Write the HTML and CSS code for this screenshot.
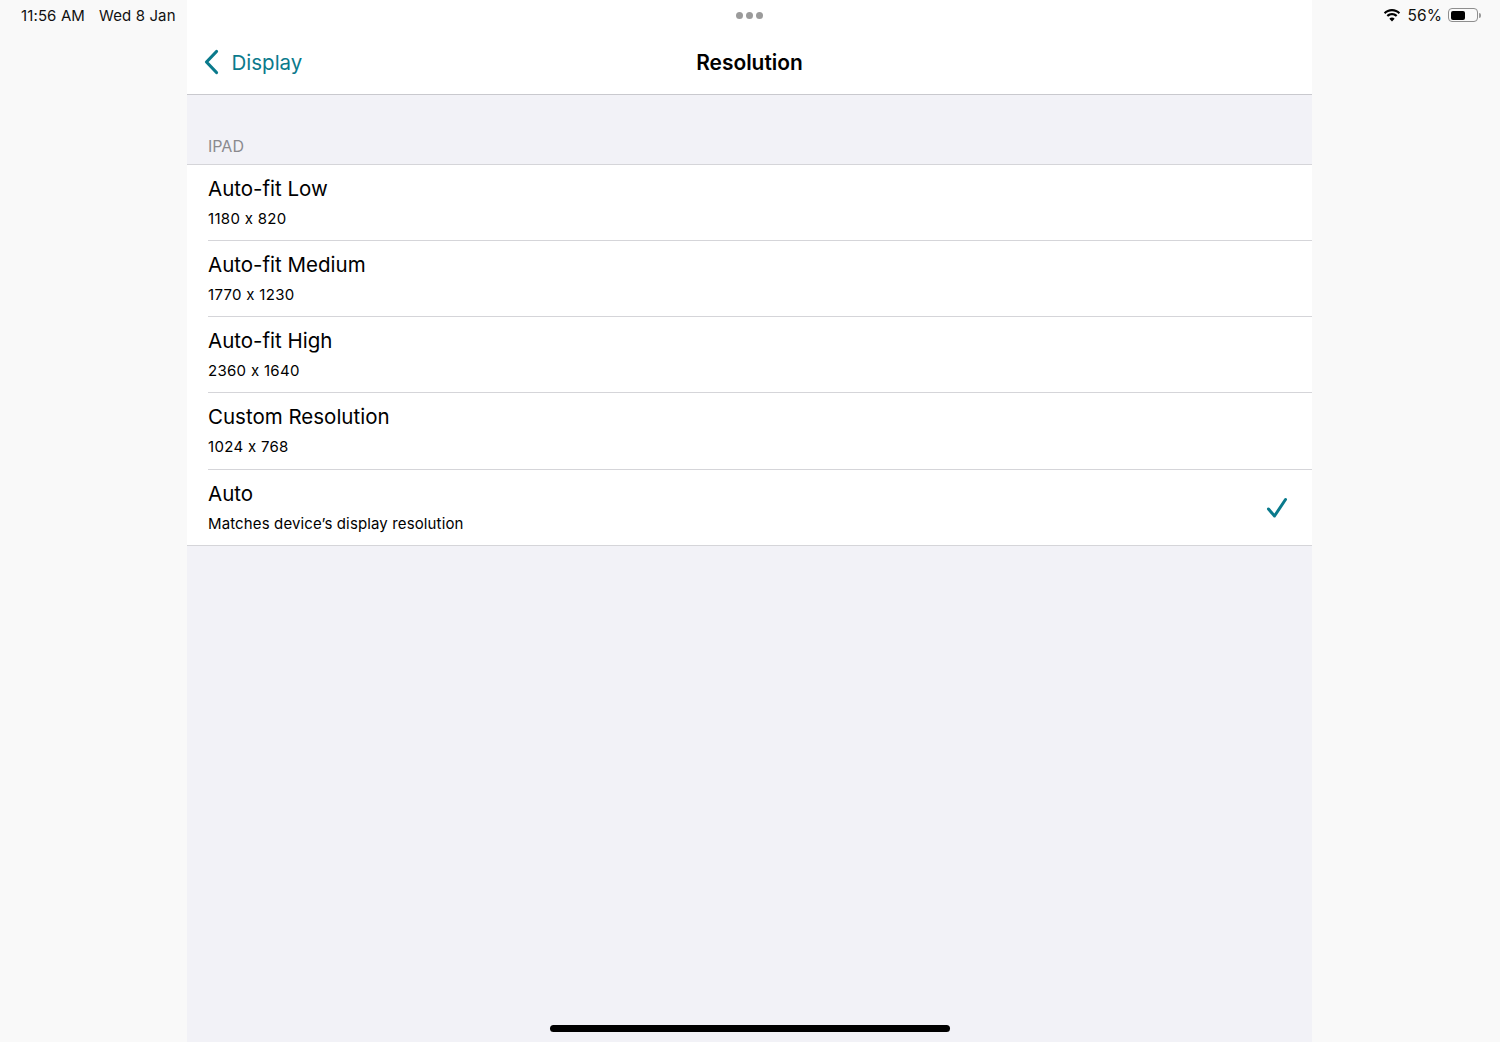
FILE: index.html
```html
<!DOCTYPE html>
<html lang="en">
<head>
  <meta charset="UTF-8">
  <title>Resolution</title>
  <link rel="stylesheet" href="styles.css">
</head>
<body>
  <div class="screen">
    <div class="side side-left">
      <span class="clock">11:56 AM</span>
      <span>Wed 8 Jan</span>
    </div>

    <div class="panel">
      <div class="navbar">
        <div class="dots"><i></i><i></i><i></i></div>
        <div class="nav-row">
          <a class="back">
            <svg width="16" height="26" viewBox="0 0 16 26"><path d="M13.5 2.5 L3.5 13 L13.5 23.5" fill="none" stroke="#0a7a8c" stroke-width="3.2" stroke-linecap="round" stroke-linejoin="round"/></svg>
            <span>Display</span>
          </a>
          <div class="title">Resolution</div>
        </div>
      </div>

      <div class="section-label">IPAD</div>
      <div class="list">
        <div class="row">
          <div class="row-text"><div class="row-title">Auto-fit Low</div><div class="row-sub row-dim">1180 x 820</div></div>
        </div>
        <div class="row">
          <div class="row-text"><div class="row-title">Auto-fit Medium</div><div class="row-sub row-dim">1770 x 1230</div></div>
        </div>
        <div class="row">
          <div class="row-text"><div class="row-title">Auto-fit High</div><div class="row-sub row-dim">2360 x 1640</div></div>
        </div>
        <div class="row">
          <div class="row-text"><div class="row-title">Custom Resolution</div><div class="row-sub row-dim">1024 x 768</div></div>
        </div>
        <div class="row row-last">
          <div class="row-text"><div class="row-title">Auto</div><div class="row-sub">Matches device’s display resolution</div></div>
          <svg class="check" width="22" height="22" viewBox="0 0 22 22"><path d="M2.5 12 L8.5 19 L19.5 2.5" fill="none" stroke="#0a7a8c" stroke-width="3" stroke-linecap="round" stroke-linejoin="round"/></svg>
        </div>
      </div>

      <div class="home-bar"></div>
    </div>

    <div class="side side-right">
      <svg width="18" height="14" viewBox="0 0 17 13"><path d="M8.5 3 C11 3 13.2 4 14.8 5.6 L16.2 4.1 C14.2 2.1 11.5 .9 8.5 .9 C5.5 .9 2.8 2.1 .8 4.1 L2.2 5.6 C3.8 4 6 3 8.5 3 Z M8.5 6.7 C10 6.7 11.2 7.3 12.2 8.2 L13.6 6.7 C12.2 5.4 10.5 4.7 8.5 4.7 C6.5 4.7 4.8 5.4 3.4 6.7 L4.8 8.2 C5.8 7.3 7 6.7 8.5 6.7 Z M8.5 12.6 L11 10 C10.3 9.3 9.5 8.9 8.5 8.9 C7.5 8.9 6.7 9.3 6 10 Z" fill="#000"/></svg>
      <span class="pct">56%</span>
      <div class="battery"><div class="battery-fill" style="width: 56%"></div></div>
      <div class="battery-tip"></div>
    </div>
  </div>
</body>
</html>
```

FILE: styles.css
```css
* {
  box-sizing: border-box;
}
html, body {
  margin: 0;
  height: 100%;
}
body {
  background-color: #f9f9f9;
  color: #000;
  font-family: Inter, "Liberation Sans", sans-serif;
  font-feature-settings: "calt" 0;
  overflow: hidden;
}
.screen {
  display: grid;
  grid-template-columns: 187px 1125px 188px;
  height: 1042px;
}
.side {
  display: flex;
  align-items: center;
  height: 30px;
  font-size: 15px;
  letter-spacing: .12px;
  color: #111;
}
.side-left {
  padding-left: 21px;
  gap: 14px;
}
.side-right {
  justify-content: flex-end;
  padding-right: 19px;
}
.pct {
  margin: 0 6px 0 6px;
  font-size: 15.5px;
}
.battery {
  width: 30px;
  height: 14px;
  border: 1px solid #8e8e8e;
  border-radius: 4px;
  padding: 1.5px;
}
.battery-fill {
  height: 100%;
  background-color: #000;
  border-radius: 2px;
}
.battery-tip {
  width: 2px;
  height: 5px;
  margin-left: 1px;
  background-color: #999;
  border-radius: 0 2px 2px 0;
}
.panel {
  display: flex;
  flex-direction: column;
  background-color: #f2f2f7;
  height: 1042px;
}
.navbar {
  height: 95px;
  background-color: #fff;
  border-bottom: 1px solid #c9c9ce;
}
.dots {
  display: flex;
  justify-content: center;
  gap: 3px;
  padding-top: 12px;
  height: 30px;
}
.dots i {
  width: 7px;
  height: 7px;
  border-radius: 50%;
  background-color: #9b9b9b;
}
.nav-row {
  display: grid;
  grid-template-columns: 1fr auto 1fr;
  align-items: center;
  height: 64px;
  padding: 0 16px;
}
.back {
  display: flex;
  align-items: center;
  gap: 12.5px;
  color: #0a7a8c;
  font-size: 20.5px;
}
.title {
  font-size: 20.9px;
  font-weight: 600;
}
.section-label {
  height: 70px;
  padding: 42px 0 0 21px;
  font-size: 16px;
  line-height: 18px;
  color: #8a8a8e;
  border-bottom: 1px solid #d5d5d9;
}
.list {
  background-color: #fff;
  padding-left: 21px;
  border-bottom: 1px solid #d5d5d9;
}
.row {
  display: flex;
  align-items: center;
  justify-content: space-between;
  height: 76.15px;
  padding-right: 24px;
  border-bottom: 1px solid #d5d5d9;
}
.row-last {
  border-bottom: none;
  height: 75px;
}
.row-text {
  align-self: flex-start;
  padding-top: 10px;
}
.row-title {
  font-size: 20.5px;
  line-height: 27px;
}
.row-sub {
  margin-top: 7px;
  font-size: 15px;
  letter-spacing: .13px;
  line-height: 19px;
}
.row-dim {
  letter-spacing: .3px;
}
.check {
  margin-top: 1px;
}
.home-bar {
  width: 400px;
  height: 7px;
  margin: auto auto 10px;
  background-color: #000;
  border-radius: 4px;
}
```
